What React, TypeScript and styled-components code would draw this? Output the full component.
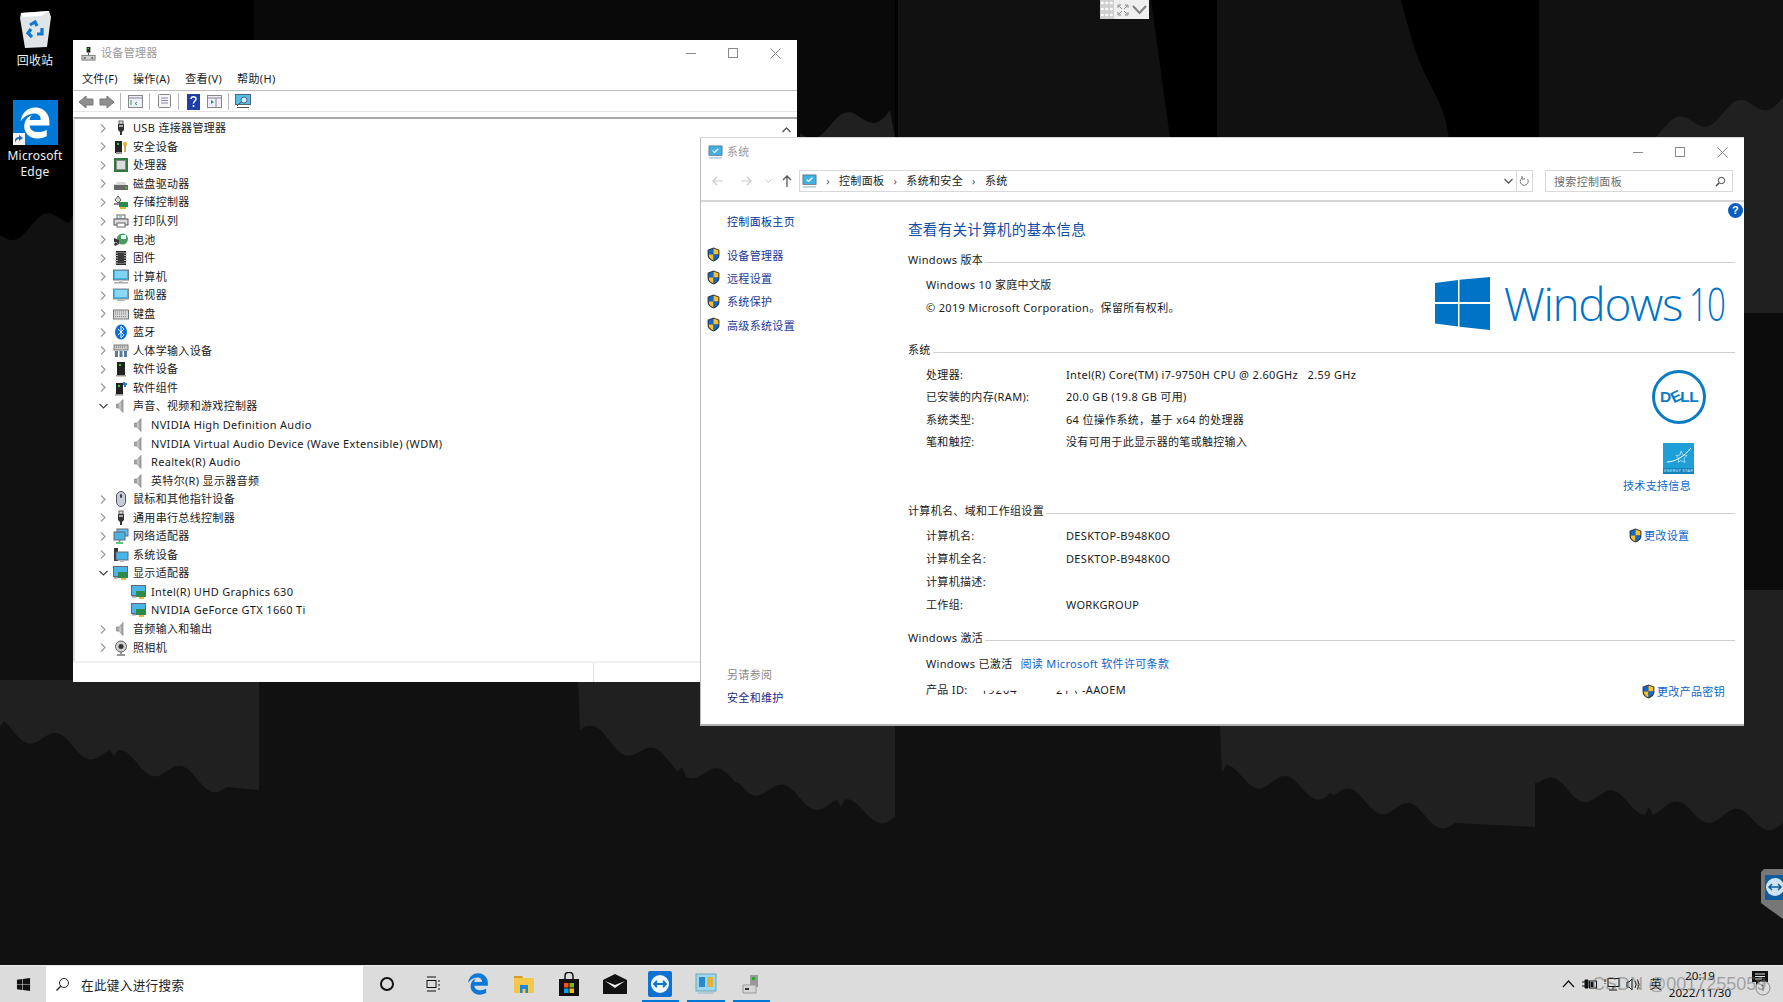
import React from "react";
import styled, { createGlobalStyle } from "styled-components";
import { FaEdgeLegacy, FaWindows } from "react-icons/fa";

const FONT = `"Noto Sans", "Noto Sans CJK SC", sans-serif`;

const Global = createGlobalStyle`
  html, body { margin: 0; padding: 0; background: #000; }
  body { font-family: ${FONT}; font-size: 11px; letter-spacing: .33px; color: #1a1a1a; }
  * { box-sizing: border-box; }
`;

/* ---------- desktop ---------- */
const Desktop = styled.div`
  position: relative; width: 1783px; height: 1002px; overflow: hidden;
  display: flex; flex-direction: column; justify-content: flex-end; background: #000;
`;
const WallpaperSvg = styled.svg`position: absolute; left: 0; top: 0;`;
const DesktopIcon = styled.div<{ $x: number; $y: number }>`
  position: absolute; left: ${p => p.$x}px; top: ${p => p.$y}px; width: 70px;
  display: flex; flex-direction: column; align-items: center;
  color: #f2f2f2; font-size: 12px; line-height: 16px; text-align: center; letter-spacing: .2px;
`;
const BinLabel = styled.span`margin-top: 5px;`;
const EdgeTile = styled.div`
  position: relative; width: 45px; height: 45px; background: #0078d7; color: #fff;
  display: flex; align-items: center; justify-content: center; margin-bottom: 3px; font-size: 32px;
`;
const ShortcutBadge = styled.div`
  position: absolute; left: 0; bottom: 0; width: 12px; height: 12px; background: #f4f4f4;
  display: flex; align-items: center; justify-content: center;
`;
const RemoteBar = styled.div`
  position: absolute; left: 1100px; top: 0; width: 49px; height: 19px; background: #efefef;
  display: flex; align-items: center;
`;
const RemoteGrip = styled.div`
  width: 14px; height: 19px; background: #cfcfcf;
  background-image: radial-gradient(#fff 1px, transparent 1.2px); background-size: 4.5px 6px;
`;
const RemoteIcons = styled.div`flex: 1; display: flex; align-items: center; justify-content: space-around; padding: 0 1px;`;
const SideTab = styled.svg`position: absolute; right: 0; top: 869px;`;

/* ---------- window shell ---------- */
const Win = styled.div<{ $x: number; $y: number; $w: number; $h: number }>`
  position: absolute; left: ${p => p.$x}px; top: ${p => p.$y}px; width: ${p => p.$w}px; height: ${p => p.$h}px;
  background: #fff; display: flex; flex-direction: column;
`;
const TitleRow = styled.div<{ $h: number; $pl: number; $pb?: number }>`
  height: ${p => p.$h}px; padding-left: ${p => p.$pl}px; padding-bottom: ${p => p.$pb ?? 0}px; flex: none; display: flex; align-items: center;
`;
const TitleText = styled.div<{ $ml: number }>`margin-left: ${p => p.$ml}px; color: #9a9a9a; line-height: 16px;`;
const WinControls = styled.div`margin-left: auto; display: flex; padding-right: 1px;`;
const WinControl = styled.div`width: 42px; height: 24px; display: flex; align-items: center; justify-content: center;`;

const Controls = () => (
  <WinControls>
    <WinControl><svg width="11" height="11"><path d="M0 5.5h10" stroke="#8a8a8a" /></svg></WinControl>
    <WinControl><svg width="11" height="11"><rect x=".5" y=".5" width="9" height="9" fill="none" stroke="#8a8a8a" /></svg></WinControl>
    <WinControl><svg width="11" height="11"><path d="M.5.5l10 10M10.500.5l-10 10" stroke="#8a8a8a" /></svg></WinControl>
  </WinControls>
);

/* ---------- device manager ---------- */
const MenuBar = styled.div`
  height: 20px; flex: none; display: flex; padding: 0 0 1px 9px; gap: 15px; align-items: center;
  border-bottom: 1px solid #bdbdbd; box-sizing: content-box; margin-top: -1px;
`;
const MenuItem = styled.span`color: #1a1a1a; line-height: 16px;`;
const Toolbar = styled.div`
  height: 21px; flex: none; display: flex; align-items: center; padding: 1px 0 0 2px;
  border-bottom: 1px solid #e6e6e6;
`;
const ToolBtn = styled.div<{ $w?: number }>`width: ${p => p.$w ?? 22}px; height: 18px; display: flex; align-items: center; justify-content: center;`;
const ToolSep = styled.div`width: 1px; height: 17px; margin: 0 3px; background: #b8b8b8;`;
const ListFrame = styled.div`
  margin-top: 5px; border-top: 2px solid #a8a8a8; border-left: 2px solid #dedede; flex: 1; position: relative; min-height: 0;
`;
const ScrollUp = styled.svg`position: absolute; top: 8px; right: 6px;`;
const TreeRow = styled.div<{ $child?: boolean }>`
  height: 18.55px; display: flex; align-items: center; padding-left: ${p => (p.$child ? 56 : 23)}px;
`;
const Chevron = styled.div`width: 10px; height: 10px; margin-right: 5px; display: flex; align-items: center; justify-content: center;`;
const TreeIcon = styled.div`width: 16px; height: 16px; flex: none; margin-right: 4px;`;
const TreeLabel = styled.span`line-height: 16px; color: #1a1a1a; white-space: nowrap;`;
const StatusBar = styled.div`
  height: 21px; flex: none; border-top: 2px solid #efefef; display: flex; padding-left: 520px;
`;
const StatusCell = styled.div`width: 1px; height: 19px; background: #e2e2e2;`;

/* ---------- system window ---------- */
const SysWin = styled(Win)`
  border-left: 1px solid #bcbcbc; border-top: 1px solid #d8d8d8; border-bottom: 2px solid #b0b0b0;
`;
const NavRow = styled.div`
  height: 30px; flex: none; display: flex; align-items: flex-start; padding: 4px 11px 0 4px; border-bottom: 2px solid #d6d6d6;
  box-sizing: content-box;
`;
const NavBtn = styled.div<{ $w: number }>`width: ${p => p.$w}px; flex: none; height: 21px; display: flex; align-items: center; justify-content: center;`;
const AddressBox = styled.div`
  flex: 1; height: 22px; border: 1px solid #d9d9d9; display: flex; align-items: center; padding-left: 2px;
`;
const Crumb = styled.span`color: #1a1a1a; line-height: 16px;`;
const CrumbSep = styled.span`width: 22px; flex: none; text-align: center; color: #555; line-height: 16px;`;
const AddressEnd = styled.div`margin-left: auto; display: flex; align-items: center; height: 100%;`;
const AddrDown = styled.div`width: 16px; display: flex; justify-content: center;`;
const Refresh = styled.div`width: 16px; height: 100%; border-left: 1px solid #d9d9d9; display: flex; align-items: center; justify-content: center;`;
const SearchBox = styled.div`
  margin-left: 12px; width: 188px; height: 22px; border: 1px solid #d9d9d9; display: flex; align-items: center; padding: 0 6px 0 8px;
  color: #6d6d6d; justify-content: space-between;
`;
const Body = styled.div`flex: 1; display: flex; min-height: 0; position: relative;`;
const HelpDot = styled.div`
  position: absolute; right: 1px; top: 1px; width: 15px; height: 15px; border-radius: 50%; background: #0a5cc0; color: #fff;
  font: bold 11px/15px "Liberation Sans", sans-serif; text-align: center;
`;
const LeftPane = styled.div`width: 207px; flex: none; display: flex; flex-direction: column; padding-top: 12px; padding-bottom: 18px;`;
const PaneHome = styled.a`margin-left: 26px; color: #003399; line-height: 16px; margin-bottom: 13px;`;
const PaneLink = styled.div`height: 23.3px; display: flex; align-items: center; padding-left: 6px; gap: 7px; color: #1a3a9a;`;
const PaneFoot = styled.div`margin-top: auto; padding-left: 26px; display: flex; flex-direction: column; gap: 7px;`;
const FootHead = styled.div`color: #8a8a8a; line-height: 16px;`;
const FootLink = styled.div`color: #1a2a8a; line-height: 16px;`;

const Main = styled.div`flex: 1; padding: 18px 9px 0 0; display: flex; flex-direction: column; min-width: 0;`;
const Heading = styled.h1`margin: 0 0 13px; font-size: 14.5px; font-weight: 400; line-height: 18px; color: #0f4ea8;`;
const SectionHead = styled.div`display: flex; align-items: center; height: 16px; gap: 2px; color: #1a1a1a;
  &::after { content: ""; flex: 1; height: 1px; background: #cfcfcf; margin-top: 6px; }
`;
const SectionBody = styled.div<{ $h: number }>`height: ${p => p.$h}px; display: flex; justify-content: space-between;`;
const Rows = styled.div<{ $pt: number; $pitch: number }>`
  padding: ${p => p.$pt}px 0 0 18px; display: grid; grid-auto-rows: ${p => p.$pitch}px; align-content: start;
`;
const InfoRow = styled.div`display: grid; grid-template-columns: 140px 1fr; align-items: center; white-space: nowrap; color: #1a1a1a;`;
const PlainRow = styled.div`display: flex; align-items: center; white-space: nowrap; color: #1a1a1a; gap: 8px;`;
const BlueLink = styled.a`color: #0a66cc;`;
const IdRow = styled.div`display: flex; align-items: center; white-space: nowrap; color: #1a1a1a; margin-top: 7.5px;`;
const IdLabel = styled.span`width: 55px; flex: none;`;
const IdFragment = styled.span<{ $w: number; $mr: number }>`
  width: ${p => p.$w}px; margin-right: ${p => p.$mr}px; flex: none; overflow: hidden; clip-path: inset(60% 0 0 0); letter-spacing: 1px;
`;
const WinLogo = styled.div`display: flex; align-items: center; gap: 13.7px; margin: 10px 9px 0 0; height: 53px; color: #0173c7;`;
const WinWord = styled.span`display: flex; font: 300 46px/53px "Open Sans", sans-serif; letter-spacing: -1.3px; white-space: nowrap;`;
const WinNum = styled.span`display: block; width: 37px; margin-left: 6.8px; transform: scaleX(.72); transform-origin: 0 50%;`;
const OemCol = styled.div`width: 112px; display: flex; flex-direction: column; align-items: flex-start; padding-top: 13px;`;
const DellRing = styled.div`
  margin-left: 29px; width: 54px; height: 54px; border-radius: 50%; border: 3px solid #0a7cc6; color: #0a7cc6;
  display: flex; align-items: center; justify-content: center;
  font: 900 15.5px/1 "Liberation Sans", sans-serif; letter-spacing: -.6px;
`;
const DellE = styled.span`display: inline-block; transform: rotate(-26deg);`;
const StarBadge = styled.div`
  margin: 19px 0 0 40px; width: 31px; height: 31px; background: #1e9fd8; display: flex; flex-direction: column; align-items: center; justify-content: flex-end;
`;
const StarLabel = styled.span`display: block; width: 100%; background: #1583bb; color: #cfeefb; font-size: 4px; line-height: 6px; text-align: center; white-space: nowrap; overflow: hidden;`;
const SupportLink = styled.a`margin-top: 4px; color: #0a66cc; line-height: 16px;`;
const ActionLink = styled.div<{ $pt: number; $ml: number; $mr: number }>`
  display: flex; align-items: center; gap: 2px; height: 16px; margin: ${p => p.$pt}px ${p => p.$mr}px 0 ${p => p.$ml}px; color: #0a66cc; white-space: nowrap;
`;
const SideSlot = styled.div`width: 112px; display: flex;`;

/* ---------- taskbar ---------- */
const Taskbar = styled.div`
  height: 37px; flex: none; background: #dcdcdc; border-top: 1px solid #ececec; display: flex; position: relative;
`;
const StartBtn = styled.div`width: 46px; display: flex; align-items: center; justify-content: center; color: #111; font-size: 15px;`;
const SearchBar = styled.div`
  width: 317px; background: #fff; display: flex; align-items: center; padding-left: 9px; gap: 11px; font-size: 12.6px; color: #222;
`;
const TaskItem = styled.div<{ $active?: boolean }>`
  width: 45.6px; position: relative; left: 1px; display: flex; align-items: center; justify-content: center;
  &::after { content: ""; display: ${p => (p.$active ? "block" : "none")}; position: absolute; left: 4px; right: 4px; bottom: 0; height: 2px; background: #0078d7; }
`;
const Tray = styled.div`margin-left: auto; display: flex; align-items: center; padding-right: 9px;`;
const TrayIcon = styled.div`width: 22px; display: flex; justify-content: center; font-size: 12px; color: #111;`;
const Clock = styled.div`width: 66px; text-align: center; font-size: 11.6px; line-height: 17px; color: #111; white-space: nowrap; letter-spacing: .1px;`;
const Notify = styled.div`margin-left: 13px; width: 28px; display: flex; justify-content: center;`;
const Watermark = styled.div`
  position: absolute; left: 1592px; top: 2px; font: 400 18px/32px "Liberation Sans", sans-serif; letter-spacing: 0; color: rgba(110,110,110,.55); white-space: nowrap; pointer-events: none;
`;

/* ---------- icons ---------- */
const Ic: Record<string, React.ReactNode> = {
  usb: <svg viewBox="0 0 16 16" width="16" height="16"><rect x="6" y="1" width="4" height="3" fill="#ddd" stroke="#666" /><path d="M5 4h6v6l-2 2v3H7v-3L5 10z" fill="#333" /><rect x="6" y="5" width="4" height="2" fill="#aaa" /></svg>,
  sec: <svg viewBox="0 0 16 16" width="16" height="16"><rect x="2" y="2" width="7" height="12" fill="#222" /><rect x="3" y="13" width="6" height="2" fill="#999" /><rect x="4" y="4" width="2" height="2" fill="#3c3" /><circle cx="12" cy="5" r="2.200" fill="#e9b93a" /><rect x="11.300" y="6" width="1.500" height="7" fill="#c9962a" /></svg>,
  cpu: <svg viewBox="0 0 16 16" width="16" height="16"><rect x="1" y="1" width="14" height="14" fill="#2c7a3c" /><rect x="3.500" y="3.500" width="9" height="9" fill="#ddd" stroke="#888" /></svg>,
  disk: <svg viewBox="0 0 16 16" width="16" height="16"><path d="M3 8l1-2h8l1 2v5H1V8z" fill="#d8d8d8" /><rect x="1" y="9" width="14" height="5" fill="#666" /><rect x="12" y="11" width="2" height="1.500" fill="#4c4" /></svg>,
  store: <svg viewBox="0 0 16 16" width="16" height="16"><path d="M2 6l3-4 3 4-3 3z" fill="#ddd" stroke="#555" /><rect x="6" y="8" width="9" height="5" fill="#2c8a4c" /><rect x="7" y="13" width="6" height="2" fill="#e6b93a" /><rect x="1" y="9" width="5" height="2" fill="#888" /></svg>,
  print: <svg viewBox="0 0 16 16" width="16" height="16"><rect x="4" y="2" width="8" height="4" fill="#fff" stroke="#666" /><rect x="1" y="6" width="14" height="6" fill="#ddd" stroke="#555" /><rect x="4" y="10" width="8" height="4" fill="#fff" stroke="#666" /><rect x="6" y="3.500" width="3" height="1" fill="#39c" /></svg>,
  batt: <svg viewBox="0 0 16 16" width="16" height="16"><circle cx="9.500" cy="7" r="5.500" fill="#4a9a5c" /><path d="M8 3h5v4H8z" fill="#dff" /><path d="M1 6l5 2v4l-5-2zM3 10l-2 2 1 2 4-2z" fill="#333" /></svg>,
  firm: <svg viewBox="0 0 16 16" width="16" height="16"><rect x="3" y="1" width="10" height="14" fill="#2a2a2a" /><path d="M2 3h12M2 5.500h12M2 8h12M2 10.500h12M2 13h12" stroke="#bbb" /><rect x="5" y="3" width="6" height="10" fill="#3a3a3a" /></svg>,
  comp: <svg viewBox="0 0 16 16" width="16" height="16"><rect x="0.500" y="1" width="15" height="10" fill="#3fb2e8" stroke="#777" /><rect x="2" y="2" width="12" height="7" fill="#7fd4f5" /><rect x="6" y="11" width="4" height="2" fill="#ccc" /><rect x="1" y="13" width="14" height="1.500" fill="#aaa" /></svg>,
  mon: <svg viewBox="0 0 16 16" width="16" height="16"><rect x="0.500" y="2" width="15" height="10" fill="#43b4e6" stroke="#888" /><rect x="2" y="3" width="12" height="7" fill="#8ad7f4" /><rect x="4" y="12" width="8" height="2" fill="#bbb" /></svg>,
  kb: <svg viewBox="0 0 16 16" width="16" height="16"><rect x="0.500" y="4" width="15" height="9" fill="#d5d5d5" stroke="#777" /><path d="M2 6h12M2 8h12M2 10.500h12" stroke="#888" strokeDasharray="1 1" /></svg>,
  bt: <svg viewBox="0 0 16 16" width="16" height="16"><ellipse cx="8" cy="8" rx="6" ry="7.500" fill="#0b6fd0" /><path d="M5 5l6 6-3 3V2l3 3-6 6" fill="none" stroke="#fff" /></svg>,
  hid: <svg viewBox="0 0 16 16" width="16" height="16"><rect x="1" y="2" width="14" height="5" fill="#ccc" stroke="#777" /><path d="M2 8h3v6H2zM6.500 8h3v6h-3zM11 8h3v6h-3z" fill="#5a7a9a" /><path d="M3 4h10" stroke="#666" strokeDasharray="1 1" /></svg>,
  soft: <svg viewBox="0 0 16 16" width="16" height="16"><rect x="4" y="1" width="8" height="13" fill="#222" /><rect x="3" y="14" width="10" height="1.500" fill="#999" /><rect x="6" y="3" width="2" height="2" fill="#3c3" /></svg>,
  softc: <svg viewBox="0 0 16 16" width="16" height="16"><rect x="3" y="3" width="7" height="11" fill="#222" /><rect x="2" y="14" width="8" height="1.500" fill="#999" /><rect x="5" y="5" width="2" height="2" fill="#3c3" /><path d="M10 2h2v1h2v2h-1v2h-2V5h-1z" fill="#2a78d0" /></svg>,
  snd: <svg viewBox="0 0 16 16" width="16" height="16"><path d="M3.500 6h2.500l4-4.500v13L6 10H3.500z" fill="#a9a9a9" stroke="#808080" strokeWidth=".7" /><path d="M7 4.500v7" stroke="#ddd" /></svg>,
  mouse: <svg viewBox="0 0 16 16" width="16" height="16"><rect x="3.500" y="0.500" width="9" height="15" rx="4.500" fill="#c5cdd8" stroke="#556" /><rect x="7" y="3" width="2" height="4" rx="1" fill="#444" /></svg>,
  net: <svg viewBox="0 0 16 16" width="16" height="16"><rect x="4" y="1" width="11" height="7" fill="#62c1ec" stroke="#667" /><rect x="1" y="4" width="11" height="8" fill="#49b3e3" stroke="#667" /><path d="M6.500 12v2M3 15h7" stroke="#2bb04a" strokeWidth="1.500" /></svg>,
  sys: <svg viewBox="0 0 16 16" width="16" height="16"><rect x="1" y="1" width="4" height="13" fill="#333" /><rect x="3" y="5" width="12" height="8" fill="#45b6e8" stroke="#667" /><rect x="7" y="13" width="4" height="2" fill="#bbb" /></svg>,
  disp: <svg viewBox="0 0 16 16" width="16" height="16"><rect x="0.500" y="1.500" width="14" height="10" fill="#4ab5e6" stroke="#667" /><rect x="5" y="7" width="10" height="6" fill="#2e8a4a" /><rect x="8" y="13" width="5" height="2" fill="#e6b93a" /><rect x="1" y="12" width="4" height="1.500" fill="#99a" /></svg>,
  cam: <svg viewBox="0 0 16 16" width="16" height="16"><circle cx="8" cy="6.500" r="5.500" fill="#cfcfcf" stroke="#666" /><circle cx="8" cy="6.500" r="2.500" fill="#333" /><path d="M8 12v2M4 15h8" stroke="#777" strokeWidth="1.500" /></svg>,
};

const Shield = () => (
  <svg viewBox="0 0 12 14" width="13" height="15">
    <path d="M6 .5l5.500 2v5c0 3-2.500 5-5.500 6-3-1-5.500-3-5.500-6v-5z" fill="#333" />
    <path d="M6 1.500V7H1.500V3z" fill="#0a6ad0" /><path d="M6 1.500l4.500 1.500v4H6z" fill="#fbc02d" />
    <path d="M1.500 7H6v5.500C3.500 11.600 1.500 10 1.500 7z" fill="#fbc02d" /><path d="M6 7h4.500c0 3-2 4.600-4.500 5.500z" fill="#0a6ad0" />
  </svg>
);

const PcIcon = () => (
  <svg viewBox="0 0 16 16" width="15" height="15">
    <rect x="1" y="1" width="14" height="10" fill="#41b2e6" stroke="#556" strokeWidth=".7" />
    <path d="M5 6l2 2 4-4" fill="none" stroke="#fff" strokeWidth="1.300" /><rect x="1" y="13" width="14" height="1.500" fill="#a9c8dc" />
  </svg>
);

const DevMgrGlyph = () => (
  <svg viewBox="0 0 16 16" width="15" height="15">
    <rect x="6" y="1" width="4" height="6" fill="#222" /><rect x="7" y="2" width="1.500" height="1.500" fill="#3c3" />
    <path d="M8 7v3" stroke="#555" /><rect x="1" y="10" width="14" height="5" fill="#d0d0d0" stroke="#777" />
    <rect x="3" y="12" width="2" height="1.500" fill="#444" /><rect x="11" y="12" width="2" height="1.500" fill="#444" />
  </svg>
);

type Kind = "closed" | "open" | "child";
const TREE: [string, string, Kind][] = [
  ["USB 连接器管理器", "usb", "closed"], ["安全设备", "sec", "closed"], ["处理器", "cpu", "closed"], ["磁盘驱动器", "disk", "closed"],
  ["存储控制器", "store", "closed"], ["打印队列", "print", "closed"], ["电池", "batt", "closed"], ["固件", "firm", "closed"],
  ["计算机", "comp", "closed"], ["监视器", "mon", "closed"], ["键盘", "kb", "closed"], ["蓝牙", "bt", "closed"],
  ["人体学输入设备", "hid", "closed"], ["软件设备", "soft", "closed"], ["软件组件", "softc", "closed"], ["声音、视频和游戏控制器", "snd", "open"],
  ["NVIDIA High Definition Audio", "snd", "child"], ["NVIDIA Virtual Audio Device (Wave Extensible) (WDM)", "snd", "child"],
  ["Realtek(R) Audio", "snd", "child"], ["英特尔(R) 显示器音频", "snd", "child"], ["鼠标和其他指针设备", "mouse", "closed"],
  ["通用串行总线控制器", "usb", "closed"], ["网络适配器", "net", "closed"], ["系统设备", "sys", "closed"], ["显示适配器", "disp", "open"],
  ["Intel(R) UHD Graphics 630", "disp", "child"], ["NVIDIA GeForce GTX 1660 Ti", "disp", "child"], ["音频输入和输出", "snd", "closed"], ["照相机", "cam", "closed"],
];

/* ---------- wallpaper ---------- */
function jag(points: number[][]): string {
  const out: string[] = [];
  let n = 0;
  points.forEach((p, i) => {
    const q = points[(i + 1) % points.length];
    out.push(`${p[0]},${p[1]}`);
    const sloped = Math.abs(q[0] - p[0]) > 20 && Math.abs(q[1] - p[1]) > 8;
    if (!sloped) return;
    const steps = Math.floor(Math.abs(q[0] - p[0]) / 4);
    for (let s = 1; s < steps; s++) {
      n++;
      const t = s / steps;
      const off = Math.sin(n * 12.9898) * 9;
      out.push(`${p[0] + (q[0] - p[0]) * t},${p[1] + (q[1] - p[1]) * t + off}`);
    }
  });
  return out.join(" ");
}
const DIM = [
  [[254, 0], [895, 0], [895, 140], [254, 140]],
];
const MID = [
  [[0, 235], [73, 215], [73, 965], [0, 965]],
  [[898, 0], [1151, 0], [1170, 138], [898, 138]],
  [[1217, 0], [1401, 0], [1449, 138], [1217, 138]],
  [[1539, 0], [1783, 0], [1783, 313], [1539, 313]],
  [[0, 680], [1783, 680], [1783, 965], [0, 965]],
];
const LIGHT = [
  [[0, 680], [259, 680], [259, 790], [227, 787], [114, 757], [0, 727]],
  [[578, 680], [895, 680], [895, 817], [841, 807], [739, 783], [682, 767], [580, 730]],
  [[1218, 680], [1535, 680], [1535, 827], [1455, 823], [1330, 793], [1222, 773]],
  [[1744, 590], [1783, 590], [1783, 823], [1649, 807], [1535, 783], [1535, 680], [1744, 680]],
  [[1632, 138], [1783, 97], [1783, 313], [1744, 313], [1744, 138]],
  [[800, 133], [890, 110], [895, 138], [800, 138]],
];

const Wallpaper = () => (
  <WallpaperSvg width="1783" height="1002">
    {DIM.map((p, i) => <polygon key={i} points={jag(p)} fill="#090909" />)}
    {MID.map((p, i) => <polygon key={i} points={jag(p)} fill="#111" />)}
    {LIGHT.map((p, i) => <polygon key={i} points={jag(p)} fill="#202020" />)}
    <rect x="1744" y="313" width="39" height="277" fill="#0c0c0c" />
  </WallpaperSvg>
);

const EnergyStar = () => (
  <StarBadge>
    <svg width="26" height="23" viewBox="0 0 26 23">
      <path d="M1 17C8 17 18 12 25 3" fill="none" stroke="#fff" />
      <path d="M15 6l2 4 4 .5-3 3 1 4-4-2-3 2 1-4-3-3 4-.5z" fill="none" stroke="#cfeefb" strokeWidth=".7" />
    </svg>
    <StarLabel>ENERGY STAR</StarLabel>
  </StarBadge>
);

const App = () => (
  <Desktop>
    <Global />
    <Wallpaper />

    <DesktopIcon $x={0} $y={8}>
      <svg width="40" height="40" viewBox="0 0 40 40">
        <path d="M6 5l28-2 2 6-4 30-22 1L5 10z" fill="#dfe4e6" />
        <path d="M6 5l28-2-8 5-18 1z" fill="#fff" />
        <path d="M15 17l5-3 2 4M27 20l0 6-5 0M17 29l-4-4 3-4" fill="none" stroke="#0f78d4" strokeWidth="3.200" />
      </svg>
      <BinLabel>回收站</BinLabel>
    </DesktopIcon>
    <DesktopIcon $x={0} $y={100}>
      <EdgeTile>
        <FaEdgeLegacy />
        <ShortcutBadge><svg width="9" height="9" viewBox="0 0 9 9"><path d="M1 8V5c0-2 2-3 4-3V0l4 3-4 3V4C3 4 2 5 1 8z" fill="#2a6ab0" /></svg></ShortcutBadge>
      </EdgeTile>
      <span>Microsoft</span>
      <span>Edge</span>
    </DesktopIcon>

    <RemoteBar>
      <RemoteGrip />
      <RemoteIcons>
        <svg width="12" height="12" viewBox="0 0 12 12"><path d="M1 4V1h3M8 1h3v3M11 8v3H8M4 11H1V8M2 2l3 3M10 2L7 5M10 10L7 7M2 10l3-3" fill="none" stroke="#888" /></svg>
        <svg width="15" height="10" viewBox="0 0 15 10"><path d="M1 1l6.500 7L14 1" fill="none" stroke="#808080" strokeWidth="2" /></svg>
      </RemoteIcons>
    </RemoteBar>

    <SideTab width="22" height="50" viewBox="0 0 22 50">
      <path d="M3 0h19v50L8 40 0 34V3z" fill="#777" />
      <rect x="4" y="6" width="18" height="25" fill="#0f5c9e" />
      <circle cx="14" cy="18" r="9" fill="#cfe3f3" />
      <path d="M8 18h12M11 15l-3 3 3 3M17 15l3 3-3 3" fill="none" stroke="#0f5c9e" strokeWidth="1.500" />
    </SideTab>

    {/* Device manager */}
    <Win $x={73} $y={40} $w={724} $h={642}>
      <TitleRow $h={30} $pl={8} $pb={4}>
        <DevMgrGlyph />
        <TitleText $ml={5}>设备管理器</TitleText>
        <Controls />
      </TitleRow>
      <MenuBar>
        <MenuItem>文件(F)</MenuItem><MenuItem>操作(A)</MenuItem><MenuItem>查看(V)</MenuItem><MenuItem>帮助(H)</MenuItem>
      </MenuBar>
      <Toolbar>
        <ToolBtn $w={21}><svg width="16" height="14" viewBox="0 0 16 14"><path d="M1 7l7-6v3h7v6H8v3z" fill="#8f8f8f" stroke="#777" /></svg></ToolBtn>
        <ToolBtn $w={21}><svg width="16" height="14" viewBox="0 0 16 14"><path d="M15 7L8 1v3H1v6h7v3z" fill="#8f8f8f" stroke="#777" /></svg></ToolBtn>
        <ToolSep />
        <ToolBtn><svg width="15" height="13" viewBox="0 0 15 13"><rect x=".5" y=".5" width="14" height="12" fill="#eef" stroke="#888" /><path d="M1 3h13" stroke="#888" /><path d="M3 5v5M9 7l-2 1.500L9 10" stroke="#2a9a4a" fill="none" /></svg></ToolBtn>
        <ToolSep />
        <ToolBtn><svg width="15" height="15" viewBox="0 0 15 15"><rect x="1.500" y=".5" width="12" height="13" rx="1" fill="#f5f5f5" stroke="#888" /><path d="M4 4h7M4 6.500h7M4 9h7" stroke="#88a" /></svg></ToolBtn>
        <ToolSep />
        <ToolBtn><svg width="13" height="16" viewBox="0 0 13 16"><rect width="13" height="16" fill="#1f3fa8" /><path d="M4 5c0-3 5-3 5 0 0 2-2.500 2-2.500 4.500" fill="none" stroke="#fff" strokeWidth="1.500" /><rect x="5.700" y="11" width="1.600" height="2" fill="#fff" /></svg></ToolBtn>
        <ToolBtn $w={21}><svg width="15" height="13" viewBox="0 0 15 13"><rect x=".5" y=".5" width="14" height="12" fill="#eef" stroke="#888" /><path d="M1 3h13M9 3v9" stroke="#888" /><path d="M4 5l3 2-3 2z" fill="#2a9a4a" /></svg></ToolBtn>
        <ToolSep />
        <ToolBtn><svg width="16" height="15" viewBox="0 0 16 15"><rect x=".5" y=".5" width="15" height="10" fill="#56bde9" stroke="#567" /><circle cx="9" cy="6" r="3" fill="#cdeefb" stroke="#567" /><path d="M6 8l-4 4M2 13.500h12" stroke="#555" /></svg></ToolBtn>
      </Toolbar>
      <ListFrame>
        <ScrollUp width="9" height="6" viewBox="0 0 9 6"><path d="M.5 5l4-4 4 4" fill="none" stroke="#555" strokeWidth="1.300" /></ScrollUp>
        {TREE.map(([label, icon, kind], i) => (
          <TreeRow key={i} $child={kind === "child"}>
            {kind !== "child" && (
              <Chevron>
                {kind === "closed"
                  ? <svg width="6" height="9" viewBox="0 0 6 9"><path d="M1 .5l4 4-4 4" fill="none" stroke="#9a9a9a" strokeWidth="1.200" /></svg>
                  : <svg width="9" height="6" viewBox="0 0 9 6"><path d="M.5 1l4 4 4-4" fill="none" stroke="#444" strokeWidth="1.200" /></svg>}
              </Chevron>
            )}
            <TreeIcon>{Ic[icon]}</TreeIcon>
            <TreeLabel>{label}</TreeLabel>
          </TreeRow>
        ))}
      </ListFrame>
      <StatusBar><StatusCell /></StatusBar>
    </Win>

    {/* System */}
    <SysWin $x={700} $y={137} $w={1044} $h={589}>
      <TitleRow $h={28} $pl={7}>
        <PcIcon />
        <TitleText $ml={4}>系统</TitleText>
        <Controls />
      </TitleRow>
      <NavRow>
        <NavBtn $w={26}><svg width="12" height="10" viewBox="0 0 12 10"><path d="M11 5H1M5 1L1 5l4 4" fill="none" stroke="#c9c9c9" strokeWidth="1.200" /></svg></NavBtn>
        <NavBtn $w={30}><svg width="12" height="10" viewBox="0 0 12 10"><path d="M1 5h10M7 1l4 4-4 4" fill="none" stroke="#c9c9c9" strokeWidth="1.200" /></svg></NavBtn>
        <NavBtn $w={14}><svg width="7" height="4" viewBox="0 0 7 4"><path d="M.5.5l3 3 3-3" fill="none" stroke="#ccc" /></svg></NavBtn>
        <NavBtn $w={24}><svg width="10" height="12" viewBox="0 0 10 12"><path d="M5 12V1M1 5l4-4 4 4" fill="none" stroke="#555" strokeWidth="1.300" /></svg></NavBtn>
        <AddressBox>
          <PcIcon />
          <CrumbSep>›</CrumbSep><Crumb>控制面板</Crumb>
          <CrumbSep>›</CrumbSep><Crumb>系统和安全</Crumb>
          <CrumbSep>›</CrumbSep><Crumb>系统</Crumb>
          <AddressEnd>
            <AddrDown><svg width="9" height="6" viewBox="0 0 9 6"><path d="M.5 1l4 4 4-4" fill="none" stroke="#555" strokeWidth="1.300" /></svg></AddrDown>
            <Refresh><svg width="11" height="11" viewBox="0 0 11 11"><path d="M4 1.500a4 4 0 1 0 4.500 1.500M3 0v3h3" fill="none" stroke="#777" /></svg></Refresh>
          </AddressEnd>
        </AddressBox>
        <SearchBox>
          <span>搜索控制面板</span>
          <svg width="11" height="11" viewBox="0 0 11 11"><circle cx="6.500" cy="4.500" r="3.200" fill="none" stroke="#444" /><path d="M4 7l-3 3" stroke="#444" strokeWidth="1.500" /></svg>
        </SearchBox>
      </NavRow>
      <Body>
        <HelpDot>?</HelpDot>
        <LeftPane>
          <PaneHome>控制面板主页</PaneHome>
          <PaneLink><Shield />设备管理器</PaneLink>
          <PaneLink><Shield />远程设置</PaneLink>
          <PaneLink><Shield />系统保护</PaneLink>
          <PaneLink><Shield />高级系统设置</PaneLink>
          <PaneFoot>
            <FootHead>另请参阅</FootHead>
            <FootLink>安全和维护</FootLink>
          </PaneFoot>
        </LeftPane>
        <Main>
          <Heading>查看有关计算机的基本信息</Heading>

          <SectionHead>Windows 版本</SectionHead>
          <SectionBody $h={74}>
            <Rows $pt={5.5} $pitch={23}>
              <PlainRow>Windows 10 家庭中文版</PlainRow>
              <PlainRow>© 2019 Microsoft Corporation。保留所有权利。</PlainRow>
            </Rows>
            <WinLogo>
              <svg width="55" height="53" viewBox="0 0 55 53">
                <path d="M0 6l23-3v22H0zM24.500 2.800L55 0v25H24.500zM0 27h23v22.600l-23-3zM24.500 27H55v26l-30.500-3.200z" fill="#0173c7" />
              </svg>
              <WinWord>Windows<WinNum>10</WinNum></WinWord>
            </WinLogo>
          </SectionBody>

          <SectionHead>系统</SectionHead>
          <SectionBody $h={145}>
            <Rows $pt={6} $pitch={22.3}>
              <InfoRow><span>处理器:</span><span>Intel(R) Core(TM) i7-9750H CPU @ 2.60GHz&nbsp;&nbsp; 2.59 GHz</span></InfoRow>
              <InfoRow><span>已安装的内存(RAM):</span><span>20.0 GB (19.8 GB 可用)</span></InfoRow>
              <InfoRow><span>系统类型:</span><span>64 位操作系统，基于 x64 的处理器</span></InfoRow>
              <InfoRow><span>笔和触控:</span><span>没有可用于此显示器的笔或触控输入</span></InfoRow>
            </Rows>
            <OemCol>
              <DellRing>D<DellE>E</DellE>LL</DellRing>
              <EnergyStar />
              <SupportLink>技术支持信息</SupportLink>
            </OemCol>
          </SectionBody>

          <SectionHead>计算机名、域和工作组设置</SectionHead>
          <SectionBody $h={111}>
            <Rows $pt={5.5} $pitch={23}>
              <InfoRow><span>计算机名:</span><span>DESKTOP-B948K0O</span></InfoRow>
              <InfoRow><span>计算机全名:</span><span>DESKTOP-B948K0O</span></InfoRow>
              <InfoRow><span>计算机描述:</span><span /></InfoRow>
              <InfoRow><span>工作组:</span><span>WORKGROUP</span></InfoRow>
            </Rows>
            <SideSlot>
              <ActionLink $pt={9} $ml={6} $mr={0}><Shield />更改设置</ActionLink>
            </SideSlot>
          </SectionBody>

          <SectionHead>Windows 激活</SectionHead>
          <SectionBody $h={70}>
            <Rows $pt={6} $pitch={23}>
              <PlainRow>Windows 已激活 <BlueLink>阅读 Microsoft 软件许可条款</BlueLink></PlainRow>
              <IdRow>
                <IdLabel>产品 ID:</IdLabel>
                <IdFragment $w={39} $mr={36}>19204 13</IdFragment>
                <IdFragment $w={21} $mr={5}>21 0</IdFragment>
                <span>-AAOEM</span>
              </IdRow>
            </Rows>
            <ActionLink $pt={38} $ml={0} $mr={10}><Shield />更改产品密钥</ActionLink>
          </SectionBody>
        </Main>
      </Body>
    </SysWin>

    {/* Taskbar */}
    <Taskbar>
      <StartBtn><FaWindows /></StartBtn>
      <SearchBar>
        <svg width="15" height="15" viewBox="0 0 15 15"><circle cx="9" cy="6" r="4.500" fill="none" stroke="#222" /><path d="M5.700 9.300L1.500 13.500" stroke="#222" strokeWidth="1.300" /></svg>
        <span>在此键入进行搜索</span>
      </SearchBar>
      <TaskItem><svg width="16" height="16" viewBox="0 0 16 16"><circle cx="8" cy="8" r="6" fill="none" stroke="#111" strokeWidth="2" /></svg></TaskItem>
      <TaskItem><svg width="16" height="16" viewBox="0 0 16 16"><path d="M3 1h9M3 15h9" stroke="#111" strokeWidth="1.200" /><rect x="3" y="4.500" width="9" height="7" fill="none" stroke="#111" /><path d="M15 4v2M15 8v2M15 12v2" stroke="#111" /></svg></TaskItem>
      <TaskItem><FaEdgeLegacy color="#0a78d8" size={22} /></TaskItem>
      <TaskItem><svg width="20" height="20" viewBox="0 0 20 20"><path d="M0 2h8l1 2h11v15H0z" fill="#f5c84c" /><path d="M0 2h8l1 2H0z" fill="#d39b27" /><rect x="6" y="11" width="8" height="8" fill="#1c87d8" /><rect x="8.500" y="15" width="3" height="4" fill="#f5c84c" /></svg></TaskItem>
      <TaskItem><svg width="20" height="24" viewBox="0 0 20 24"><rect y="7" width="20" height="17" fill="#111" /><path d="M6 8V4c0-5 8-5 8 0v4" fill="none" stroke="#111" strokeWidth="1.500" /><rect x="5" y="11" width="4.500" height="4.500" fill="#f25022" /><rect x="10.500" y="11" width="4.500" height="4.500" fill="#7fba00" /><rect x="5" y="16.500" width="4.500" height="4.500" fill="#00a4ef" /><rect x="10.500" y="16.500" width="4.500" height="4.500" fill="#ffb900" /></svg></TaskItem>
      <TaskItem><svg width="24" height="20" viewBox="0 0 24 20"><path d="M0 6L12 0l12 6v14H0z" fill="#111" /><path d="M2 7l10 7 10-7-10 4z" fill="#eee" /></svg></TaskItem>
      <TaskItem $active><svg width="24" height="26" viewBox="0 0 24 26"><rect width="24" height="26" rx="2" fill="#0e72d2" /><circle cx="12" cy="13" r="9" fill="#eef6fd" /><path d="M6 13h12M9 10l-3 3 3 3M15 10l3 3-3 3" fill="none" stroke="#0e72d2" strokeWidth="1.800" /></svg></TaskItem>
      <TaskItem $active><svg width="22" height="22" viewBox="0 0 22 22"><rect x="1" y="1" width="20" height="17" fill="#9dd6f3" stroke="#6aa" /><rect x="4" y="4" width="6" height="10" fill="#2a87c9" /><rect x="12" y="4" width="6" height="10" fill="#e2b33a" /><rect x="3" y="19" width="16" height="2" fill="#b9c9d2" /></svg></TaskItem>
      <TaskItem $active><svg width="22" height="22" viewBox="0 0 22 22"><path d="M9 2h8v12H9z" fill="#999" /><rect x="11" y="4" width="3" height="3" fill="#2a2" /><path d="M2 12h13v8H2z" fill="#d5d5d5" stroke="#999" /><rect x="4" y="15" width="4" height="2" fill="#333" /></svg></TaskItem>
      <Tray>
        <TrayIcon><svg width="13" height="8" viewBox="0 0 13 8"><path d="M1 7l5.500-6L12 7" fill="none" stroke="#111" strokeWidth="1.200" /></svg></TrayIcon>
        <TrayIcon><svg width="16" height="11" viewBox="0 0 16 11"><path d="M0 3h3M0 7h3M3 1h3v8H3z" stroke="#111" fill="#111" /><rect x="7.500" y="2" width="7" height="7" fill="none" stroke="#111" /><rect x="8.500" y="3" width="3" height="5" fill="#111" /></svg></TrayIcon>
        <TrayIcon><svg width="16" height="13" viewBox="0 0 16 13"><rect x="4" y=".5" width="11" height="8" fill="none" stroke="#111" /><path d="M9 9v2M5 12h8" stroke="#111" /><path d="M1 1v3M1 5v1" stroke="#111" /></svg></TrayIcon>
        <TrayIcon><svg width="16" height="13" viewBox="0 0 16 13"><path d="M1 4h2l3-3v11L3 9H1z" fill="none" stroke="#111" /><path d="M9 3q2 3.500 0 7M11.500 1.500q3 5 0 10" fill="none" stroke="#111" /></svg></TrayIcon>
        <TrayIcon>英</TrayIcon>
        <Clock>20:19<br />2022/11/30</Clock>
        <Notify><svg width="22" height="30" viewBox="0 0 22 30"><path d="M3 2h16v11H10l-3 3v-3H3z" fill="#111" /><path d="M6 5h10M6 7.500h10M6 10h7" stroke="#ddd" /><circle cx="14" cy="19" r="7" fill="none" stroke="#888" /><path d="M14 16v6M12 17l2-1" stroke="#666" /></svg></Notify>
      </Tray>
      <Watermark>CSDN @0017255059</Watermark>
    </Taskbar>
  </Desktop>
);

export default App;
